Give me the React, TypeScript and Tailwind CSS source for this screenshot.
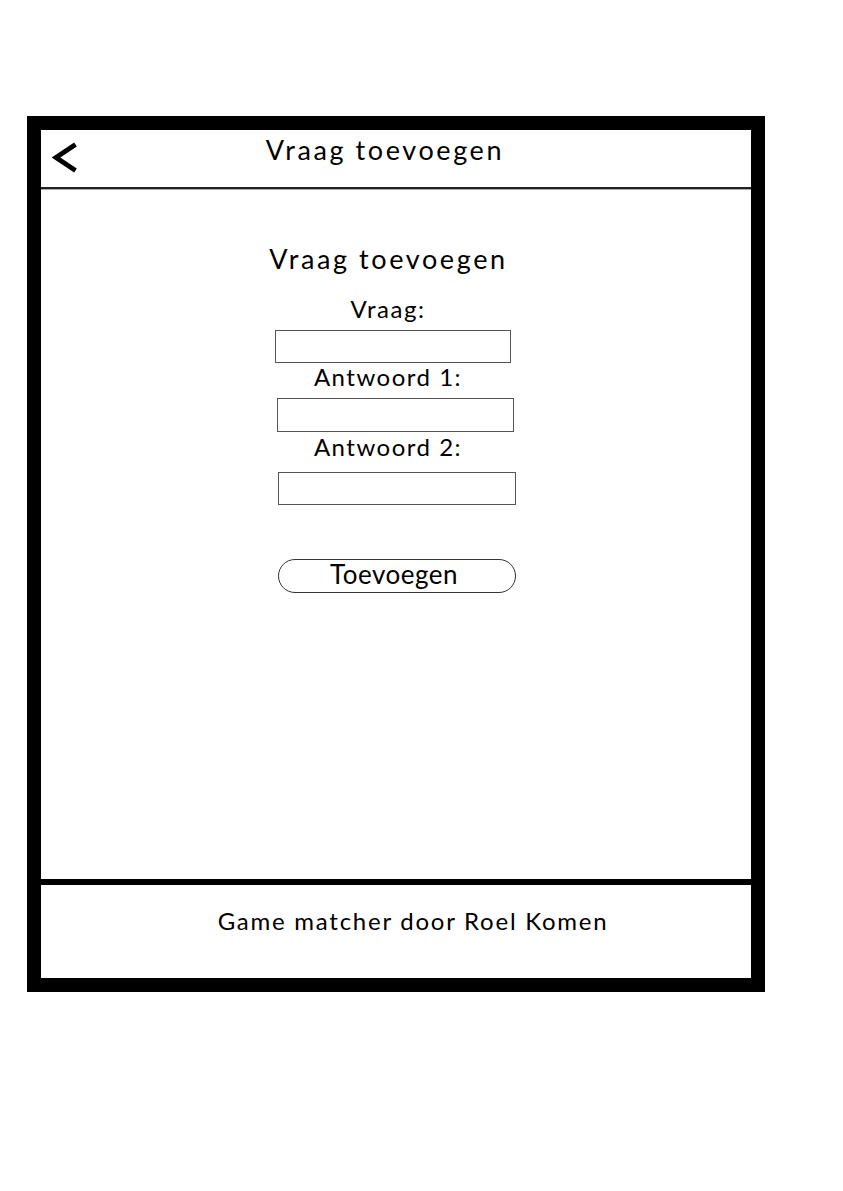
import React from "react";

export default function App() {
  const font = { fontFamily: "Lato, 'Open Sans', sans-serif" };
  return (
    <div className="w-[843px] h-[1191px] bg-white relative" style={font}>
      <div className="pt-[116px] pl-[27px]">
        <div className="w-[738px] h-[876px] border-[14px] border-black flex flex-col bg-white">
          {/* header */}
          <div className="h-[57px] flex items-start relative">
            <svg
              className="absolute left-[11px] top-[12px]"
              width="26"
              height="32"
              viewBox="0 0 26 32"
            >
              <path
                d="M23.5 2.5 L4 15.5 L23.5 28.5"
                fill="none"
                stroke="black"
                strokeWidth="4.8"
                strokeLinecap="butt"
                strokeLinejoin="miter"
              />
            </svg>
            <div className="w-full flex justify-center">
              <div className="ml-[-22px] mt-[4px] text-[27px] leading-[32px] tracking-[2.6px] text-black whitespace-nowrap">
                Vraag toevoegen
              </div>
            </div>
          </div>
          <div className="h-[2px] bg-[#222]" />
          <div className="h-[1px] bg-[#aaa]" />
          {/* content */}
          <div className="flex-1">
            <div className="ml-[234px] w-[224px] flex flex-col items-center pt-[53px]">
              <div className="ml-[3px] text-[27px] leading-[32px] tracking-[2.6px] whitespace-nowrap text-black">
                Vraag toevoegen
              </div>
              <div className="ml-[2px] mt-[20px] text-[24px] leading-[28px] tracking-[1.5px] whitespace-nowrap text-black">
                Vraag:
              </div>
              <div className="self-start mt-[7px] w-[236px] h-[33px] border border-[#555]" />
              <div className="ml-[2px] mt-[0px] text-[24px] leading-[28px] tracking-[1.5px] whitespace-nowrap text-black">
                Antwoord 1:
              </div>
              <div className="self-start ml-[2px] mt-[6.6px] w-[237px] h-[34px] border border-[#555]" />
              <div className="ml-[2px] mt-[1.4px] text-[24px] leading-[28px] tracking-[1.5px] whitespace-nowrap text-black">
                Antwoord 2:
              </div>
              <div className="self-start ml-[3px] mt-[10.6px] w-[238px] h-[33px] border border-[#555]" />
              <div className="self-start ml-[3px] mt-[54px] w-[238px] h-[34px] border border-[#333] rounded-full flex items-center justify-center">
                <span className="text-[26px] leading-[30px] tracking-[0.5px] text-black ml-[-6px] mb-[3px]">Toevoegen</span>
              </div>
            </div>
          </div>
          <div className="h-[6px] bg-black" />
          {/* footer */}
          <div className="h-[93px] flex justify-center">
            <div className="ml-[34px] mt-[22px] text-[24px] leading-[28px] tracking-[1.75px] whitespace-nowrap text-black">
              Game matcher door Roel Komen
            </div>
          </div>
        </div>
      </div>
    </div>
  );
}
